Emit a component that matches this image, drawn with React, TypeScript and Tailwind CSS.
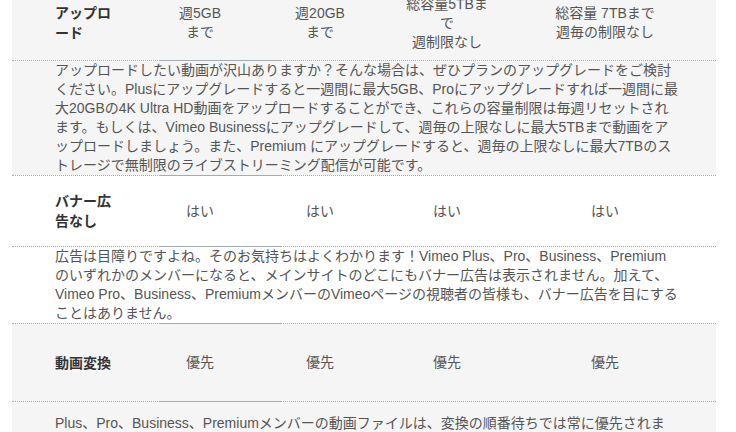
import React from 'react';

// plan comparison table, scrolled mid-way (rows are cut at the top)
const Separator = () => (
  <div className="flex h-px">
    <div className="w-[148px] border-t border-dotted border-[#a3abb3]"></div>
    <div className="w-[120px] border-t border-solid border-[#a3abb3]"></div>
    <div className="flex-1 border-t border-dotted border-[#a3abb3]"></div>
  </div>
);

type Cells = { label: React.ReactNode; values: React.ReactNode[] };

const FeatureRow = ({ label, values, bg, height }: Cells & { bg: string; height: string }) => (
  <div className={`flex items-center ${bg} ${height} leading-[19px] text-sm text-[#555555]`}>
    <div className="w-[128px] shrink-0 pl-[43px] pr-[21px] font-bold text-[#333333] leading-[20px]">{label}</div>
    <div className="w-[120px] shrink-0 text-center">{values[0]}</div>
    <div className="w-[120px] shrink-0 text-center">{values[1]}</div>
    <div className="w-[134px] shrink-0 px-[24px] text-center">{values[2]}</div>
    <div className="w-[182px] shrink-0 text-center">{values[3]}</div>
  </div>
);

const Description = ({ bg, extra, children }: { bg: string; extra?: string; children: React.ReactNode }) => (
  <div className={`${bg} ${extra ?? ''} pl-[43px] pr-[10px] text-sm leading-[19px] text-[#555555]`}>
    <p className="w-[650px]">{children}</p>
  </div>
);

export default function App() {
  return (
    <div className="w-[736px] h-[432px] overflow-hidden bg-white font-['Liberation_Sans','Noto_Sans_CJK_JP',sans-serif]">
      <div className="mx-[12px] w-[704px] -mt-[14px]">
        <FeatureRow
          bg="bg-[#f5f5f5]"
          height="h-[74px]"
          label="アップロード"
          values={[
            <>週5GB<br />まで</>,
            <>週20GB<br />まで</>,
            <>総容量5TBまで<br />週制限なし</>,
            <>総容量 7TBまで<br />週毎の制限なし</>,
          ]}
        />
        <Separator />
        <Description bg="bg-[#f5f5f5]" extra="h-[114px]">
          アップロードしたい動画が沢山ありますか？そんな場合は、ぜひプランのアップグレードをご検討<br />
          ください。Plusにアップグレードすると一週間に最大5GB、Proにアップグレードすれば一週間に最<br />
          大20GBの4K Ultra HD動画をアップロードすることができ、これらの容量制限は毎週リセットされ<br />
          ます。もしくは、Vimeo Businessにアップグレードして、週毎の上限なしに最大5TBまで動画をア<br />
          ップロードしましょう。また、Premium にアップグレードすると、週毎の上限なしに最大7TBのス<br />
          トレージで無制限のライブストリーミング配信が可能です。
        </Description>
        <Separator />
        <FeatureRow
          bg="bg-white"
          height="h-[70px]"
          label="バナー広告なし"
          values={['はい', 'はい', 'はい', 'はい']}
        />
        <Separator />
        <Description bg="bg-white" extra="h-[76px]">
          広告は目障りですよね。そのお気持ちはよくわかります！Vimeo Plus、Pro、Business、Premium<br />
          のいずれかのメンバーになると、メインサイトのどこにもバナー広告は表示されません。加えて、<br />
          Vimeo Pro、Business、PremiumメンバーのVimeoページの視聴者の皆様も、バナー広告を目にする<br />
          ことはありません。
        </Description>
        <Separator />
        <FeatureRow
          bg="bg-[#f5f5f5]"
          height="h-[77px]"
          label="動画変換"
          values={['優先', '優先', '優先', '優先']}
        />
        <Separator />
        <Description bg="bg-[#f5f5f5]" extra="pt-[12px] pb-[12px]">
          Plus、Pro、Business、Premiumメンバーの動画ファイルは、変換の順番待ちでは常に優先されま<br />
          す。
        </Description>
      </div>
    </div>
  );
}
